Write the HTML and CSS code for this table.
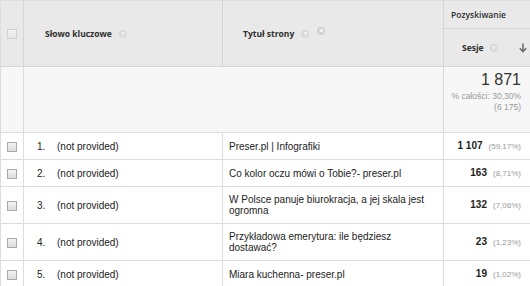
FILE: index.html
```html
<!DOCTYPE html>
<html lang="pl">
<head>
<meta charset="utf-8">
<title>Słowa kluczowe</title>
<link rel="stylesheet" href="styles.css">
</head>
<body>
<table class="report">
  <colgroup>
    <col class="c-check">
    <col class="c-key">
    <col class="c-title">
    <col class="c-metric">
  </colgroup>
  <thead>
    <tr class="hrow1">
      <th rowspan="2" class="th-check"><span class="cb cb-head"></span></th>
      <th rowspan="2" class="th-key"><span class="hwrap">Słowo kluczowe<span class="help">?</span></span></th>
      <th rowspan="2" class="th-title"><span class="hwrap">Tytuł strony<span class="help">?</span><span class="remove">×</span></span></th>
      <th class="th-group">Pozyskiwanie</th>
    </tr>
    <tr class="hrow2">
      <th class="th-metric">
        <div class="metric-head">
          <span>Sesje</span><span class="help">?</span>
          <svg class="sort" width="8" height="10" viewBox="0 0 8 10"><path d="M4 0.5 V8.5 M0.8 5.3 L4 8.6 L7.2 5.3" fill="none" stroke="#6b6b6b" stroke-width="1.5"/></svg>
        </div>
      </th>
    </tr>
  </thead>
  <tbody>
    <tr class="totals">
      <td class="td-check"></td>
      <td colspan="2" class="td-blank"></td>
      <td class="td-total">
        <div class="total-big">1 871</div>
        <div class="total-small">% całości: 30,30%</div>
        <div class="total-small">(6 175)</div>
      </td>
    </tr>
    <tr>
      <td class="td-check"><span class="cb"></span></td>
      <td class="td-key"><span class="num">1.</span>(not provided)</td>
      <td class="td-title">Preser.pl | Infografiki</td>
      <td class="td-val"><b>1 107</b><span class="pct">(59,17%)</span></td>
    </tr>
    <tr>
      <td class="td-check"><span class="cb"></span></td>
      <td class="td-key"><span class="num">2.</span>(not provided)</td>
      <td class="td-title">Co kolor oczu mówi o Tobie?- preser.pl</td>
      <td class="td-val"><b>163</b><span class="pct">(8,71%)</span></td>
    </tr>
    <tr>
      <td class="td-check"><span class="cb"></span></td>
      <td class="td-key"><span class="num">3.</span>(not provided)</td>
      <td class="td-title">W Polsce panuje biurokracja, a jej skala jest ogromna</td>
      <td class="td-val"><b>132</b><span class="pct">(7,06%)</span></td>
    </tr>
    <tr>
      <td class="td-check"><span class="cb"></span></td>
      <td class="td-key"><span class="num">4.</span>(not provided)</td>
      <td class="td-title">Przykładowa emerytura: ile będziesz dostawać?</td>
      <td class="td-val"><b>23</b><span class="pct">(1,23%)</span></td>
    </tr>
    <tr>
      <td class="td-check"><span class="cb"></span></td>
      <td class="td-key"><span class="num">5.</span>(not provided)</td>
      <td class="td-title">Miara kuchenna- preser.pl</td>
      <td class="td-val"><b>19</b><span class="pct">(1,02%)</span></td>
    </tr>
  </tbody>
</table>
</body>
</html>
```

FILE: styles.css
```css
html, body {
  margin: 0;
  padding: 0;
  background: #ffffff;
}

body {
  width: 530px;
  height: 286px;
  overflow: hidden;
  font-family: "Liberation Sans", Arial, sans-serif;
  color: #222;
}

.report {
  width: 530px;
  table-layout: fixed;
  border-collapse: collapse;
  border-spacing: 0;
}

.c-check { width: 23px; }
.c-key { width: 199px; }
.c-title { width: 221px; }
.c-metric { width: 87px; }

/* ---------- header ---------- */
.report thead th {
  background: #e9e9e9;
  font-family: "Open Sans", "DejaVu Sans", sans-serif;
  font-size: 8.5px;
  font-weight: 700;
  color: #2e2e2e;
  text-align: left;
  padding: 0;
  border: 1px solid #d6d6d6;
}

.report .hrow1 th {
  border-top: 1px solid #dedede;
}

.report .th-check {
  text-align: center;
  border-left: 1px solid #dedede;
}

.report .th-group {
  height: 27px;
  padding-left: 7px;
  font-weight: 600;
  vertical-align: middle;
}

.report .th-metric {
  height: 37px;
}

.report .th-key { padding-left: 21px; }
.report .th-title { padding-left: 20px; }

.hwrap {
  display: inline-flex;
  align-items: center;
}

.help {
  display: inline-block;
  width: 8px;
  height: 8px;
  border-radius: 50%;
  background: #d9d9d9;
  color: #fff;
  font-family: "Liberation Sans", Arial, sans-serif;
  font-size: 6px;
  font-weight: 700;
  line-height: 8px;
  text-align: center;
  margin-left: 7px;
}

.remove {
  display: inline-block;
  width: 8px;
  height: 8px;
  border-radius: 50%;
  background: #d0d0d0;
  color: #fff;
  font-family: "Liberation Sans", Arial, sans-serif;
  font-size: 8px;
  font-weight: 700;
  line-height: 8px;
  text-align: center;
  margin-left: 8px;
  margin-top: -6px;
}

.metric-head {
  display: flex;
  align-items: center;
  padding-left: 18px;
  padding-right: 3px;
}

.metric-head .help {
  margin-left: 6px;
}

.sort {
  margin-left: auto;
  display: block;
}

/* ---------- checkboxes ---------- */
.cb {
  display: inline-block;
  width: 8px;
  height: 8px;
  border: 1px solid #a9a9a9;
  background: linear-gradient(#f4f4f4, #dcdcdc);
  vertical-align: middle;
}

.cb-head {
  border-color: #d0d0d0;
  background: linear-gradient(#f2f2f2, #e6e6e6);
}

/* ---------- body ---------- */
.report tbody td {
  font-size: 10px;
  line-height: 11px;
  padding: 7px 0;
  border: 1px solid #dddddd;
  vertical-align: middle;
  color: #222;
}

.report .totals td {
  background: #f7f7f7;
  padding: 0;
  height: 65px;
}

.report .totals .td-blank {
  border-right: 1px solid #d9d9d9;
}

.report .totals .td-total {
  text-align: right;
  vertical-align: top;
  padding: 0 9px 0 0;
}

.total-big {
  font-size: 16px;
  line-height: 18px;
  color: #333;
  margin-top: 4px;
  margin-bottom: 2px;
}

.total-small {
  font-size: 8.5px;
  line-height: 11px;
  color: #9a9a9a;
}

.td-check {
  text-align: center;
}

.report .td-key {
  padding-left: 13px;
}

.num {
  display: inline-block;
  width: 20px;
}

.report .td-title {
  padding-left: 6px;
  padding-right: 8px;
}

.report .td-val {
  text-align: right;
  padding-right: 9px;
}

.td-val b {
  font-weight: 700;
  color: #222;
}

.pct {
  font-size: 8px;
  color: #9a9a9a;
  margin-left: 6px;
}
```
